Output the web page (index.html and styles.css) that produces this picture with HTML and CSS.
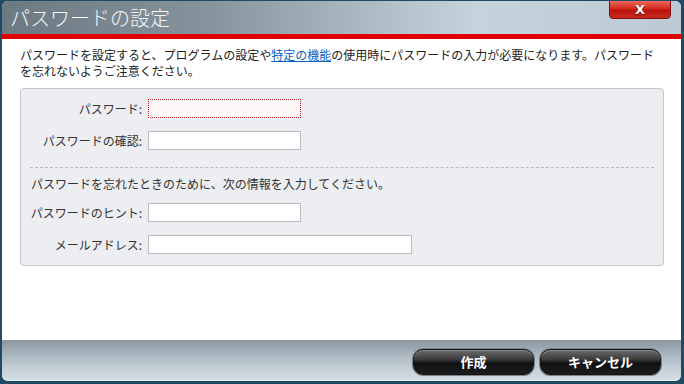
FILE: index.html
```
<!DOCTYPE html>
<html lang="ja">
<head>
  <meta charset="UTF-8" />
  <title>パスワードの設定</title>
  <link rel="stylesheet" href="styles.css">
</head>
<body>
  <div class="window">
    <header class="titlebar">
      <h1>パスワードの設定</h1>
      <button class="close-button">X</button>
    </header>

    <main class="content">
      <p class="intro">パスワードを設定すると、プログラムの設定や<a href="#">特定の機能</a>の使用時にパスワードの入力が必要になります。パスワードを忘れないようご注意ください。</p>

      <section class="panel">
        <div class="row">
          <label>パスワード:</label>
          <input type="password" class="field field-focus">
        </div>
        <div class="row">
          <label>パスワードの確認:</label>
          <input type="password" class="field">
        </div>

        <div class="separator"></div>

        <p class="note">パスワードを忘れたときのために、次の情報を入力してください。</p>

        <div class="row">
          <label>パスワードのヒント:</label>
          <input type="text" class="field">
        </div>
        <div class="row">
          <label>メールアドレス:</label>
          <input type="text" class="field field-wide">
        </div>
      </section>
    </main>

    <footer class="actions">
      <button class="action-button">作成</button>
      <button class="action-button">キャンセル</button>
    </footer>
  </div>
</body>
</html>
```

FILE: styles.css
```
html, body {
  margin: 0;
  padding: 0;
}

body {
  width: 684px;
  height: 384px;
  background: #234a64;
  font-family: "Noto Sans CJK JP", "Noto Sans", sans-serif;
  overflow: hidden;
}

.window {
  margin: 1px 3px 0 2px;
  height: 379px;
  display: flex;
  flex-direction: column;
  background: #fff;
  border-radius: 6px;
  overflow: hidden;
  border-bottom: 1px solid #e8eef2;
}

.titlebar {
  height: 33px;
  display: flex;
  justify-content: space-between;
  align-items: flex-start;
  background: linear-gradient(90deg, #6c7982 0%, #86939c 30%, #b3c1cb 58%, #c6d3dc 70%, #bccad4 100%);
  border-bottom: 5px solid #e00000;
}

.titlebar h1 {
  margin: 0;
  padding: 4px 0 0 8px;
  font-size: 20px;
  font-weight: 300;
  line-height: 26px;
  color: #f4f6f8;
}

.close-button {
  width: 62px;
  height: 19px;
  margin: -1px 10px 0 0;
  padding: 0;
  border: 1px solid #7a1010;
  border-radius: 0 0 4px 4px;
  background: linear-gradient(180deg, #e96a5e 0%, #d3281c 45%, #b8140c 55%, #c92b20 100%);
  color: #fff;
  font-family: "DejaVu Sans", sans-serif;
  font-size: 13px;
  font-weight: bold;
  line-height: 16px;
  text-shadow: 0 1px 1px #5a0000;
}

.content {
  flex: 1;
  padding: 8px 17px 0 18px;
}

.intro {
  margin: 0;
  font-size: 12px;
  line-height: 16px;
  color: #222;
}

.intro a {
  color: #0b63c4;
  text-decoration: underline;
}

.panel {
  margin-top: 9px;
  padding: 10px 0;
  background: #eceef1;
  border: 1px solid #c3c7cb;
  border-radius: 4px;
  height: 156px;
}

.row {
  display: flex;
  align-items: center;
  margin-bottom: 13px;
}

.row label {
  width: 121px;
  padding-right: 6px;
  text-align: right;
  font-size: 12px;
  color: #333;
}

.field {
  box-sizing: border-box;
  width: 153px;
  height: 19px;
  margin: 0;
  border: 1px solid #b9bdc2;
  background: #fff;
  padding: 0 3px;
}

.field-focus {
  border: 1px dotted #b02020;
  background: #fff8f8;
}

.field-wide {
  width: 264px;
}

.separator {
  margin: 17px 9px 0 9px;
  border-top: 1px dashed #b9bdc2;
}

.note {
  margin: 8px 0 11px 10px;
  font-size: 12px;
  line-height: 16px;
  color: #333;
}

.actions {
  height: 40px;
  display: flex;
  justify-content: flex-end;
  align-items: center;
  gap: 6px;
  padding-right: 20px;
  background: linear-gradient(180deg, #8b969f 0%, #a9b5be 35%, #c4cfd7 70%, #d3dde4 100%);
}

.action-button {
  width: 121px;
  height: 26px;
  margin-top: 3px;
  border: 1px solid #111;
  border-radius: 10px;
  background: linear-gradient(180deg, #6b6b6b 0%, #3a3a3a 40%, #111 55%, #1c1c1c 100%);
  box-shadow: inset 0 1px 0 #8a8a8a, 0 0 0 1px #7d868d;
  color: #fff;
  font-family: "Noto Sans CJK JP", sans-serif;
  font-size: 13px;
  font-weight: bold;
  line-height: 20px;
}
```
